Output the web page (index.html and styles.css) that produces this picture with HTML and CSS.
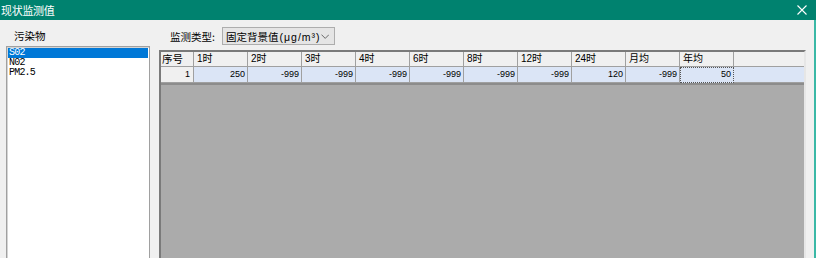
FILE: index.html
```html
<!DOCTYPE html>
<html lang="zh-CN">
<head>
<meta charset="utf-8">
<title>现状监测值</title>
<link rel="stylesheet" href="styles.css">
</head>
<body>
<div class="window">
  <div class="titlebar">
    <span class="title">现状监测值</span>
    <svg class="close" width="10" height="10" viewBox="0 0 10 10"><path d="M0.5 0.5L9.5 9.5M9.5 0.5L0.5 9.5" stroke="#fff" stroke-width="1.1" fill="none"/></svg>
  </div>
  <div class="content">
    <div class="left">
      <div class="label">污染物</div>
      <div class="listbox">
        <div class="item selected">S02</div>
        <div class="item">N02</div>
        <div class="item">PM2.5</div>
      </div>
    </div>
    <div class="right">
      <div class="toolbar">
        <span class="tlabel">监测类型:</span>
        <div class="combo">
          <span class="combo-text">固定背景值<span class="unit">(μg/m³)</span></span>
          <svg class="chev" width="9" height="5" viewBox="0 0 9 5"><path d="M0.5 0.5L4.5 4.5L8.5 0.5" stroke="#606060" stroke-width="1" fill="none"/></svg>
        </div>
      </div>
      <div class="grid">
        <div class="row head">
          <div class="cell rh">序号</div>
          <div class="cell">1时</div>
          <div class="cell">2时</div>
          <div class="cell">3时</div>
          <div class="cell">4时</div>
          <div class="cell">6时</div>
          <div class="cell">8时</div>
          <div class="cell">12时</div>
          <div class="cell">24时</div>
          <div class="cell">月均</div>
          <div class="cell">年均</div>
          <div class="cell last"></div>
        </div>
        <div class="row data">
          <div class="cell rh">1</div>
          <div class="cell">250</div>
          <div class="cell">-999</div>
          <div class="cell">-999</div>
          <div class="cell">-999</div>
          <div class="cell">-999</div>
          <div class="cell">-999</div>
          <div class="cell">-999</div>
          <div class="cell">120</div>
          <div class="cell">-999</div>
          <div class="cell focus">50</div>
          <div class="cell last"></div>
        </div>
      </div>
    </div>
  </div>
</div>
</body>
</html>
```

FILE: styles.css
```css
html, body {
  margin: 0;
  padding: 0;
}
body {
  width: 816px;
  height: 258px;
  overflow: hidden;
  background: #f0f0f0;
  font-family: "Liberation Sans", "Noto Sans CJK SC", sans-serif;
  color: #000;
}
.window {
  display: flex;
  flex-direction: column;
  height: 258px;
}
.titlebar {
  height: 20px;
  flex: none;
  background: #00826f;
  color: #fff;
  display: flex;
  align-items: center;
  justify-content: space-between;
  padding: 0 9px 0 1px;
  font-size: 11px;
}
.title {
  font-family: "Noto Sans CJK SC", sans-serif;
  line-height: 20px;
  letter-spacing: -0.3px;
}
.close {
  display: block;
  margin-top: -1px;
}
.content {
  flex: 1;
  display: flex;
  border-right: 2px solid #3ab8a6;
  min-height: 0;
}
.left {
  width: 150px;
  flex: none;
  padding: 7px 0 0 6px;
  box-sizing: border-box;
  display: flex;
  flex-direction: column;
}
.label {
  font-family: "Noto Sans CJK SC", sans-serif;
  font-size: 10.5px;
  line-height: 17px;
  height: 17px;
  padding-left: 8px;
}
.listbox {
  margin-top: 2px;
  width: 144px;
  flex: 1;
  box-sizing: border-box;
  background: #fff;
  border-left: 1px solid #a0a0a0;
  border-top: 1px solid #a0a0a0;
  border-right: 1px solid #a0a0a0;
  box-shadow: inset 1px 1px 0 #d4d4d4;
  padding: 1px 1px 0 1px;
}
.item {
  font-family: "Liberation Mono", monospace;
  font-size: 10px;
  line-height: 10px;
  height: 10px;
  padding-left: 1px;
  letter-spacing: -0.8px;
}
.item.selected {
  background: #0078d7;
  color: #fff;
}
.right {
  flex: 1;
  padding: 7px 8px 0 9px;
  display: flex;
  flex-direction: column;
  min-width: 0;
}
.toolbar {
  display: flex;
  align-items: center;
  height: 18px;
}
.tlabel {
  width: 52px;
  padding-left: 11px;
  font-family: "Noto Sans CJK SC", sans-serif;
  font-size: 10.5px;
  white-space: nowrap;
}
.combo {
  width: 113px;
  height: 18px;
  box-sizing: border-box;
  border: 1px solid #adadad;
  background: #e5e5e5;
  display: flex;
  align-items: center;
  justify-content: space-between;
  padding: 0 5px 0 3px;
}
.combo-text {
  font-family: "Noto Sans CJK SC", sans-serif;
  font-size: 10.5px;
  white-space: nowrap;
}
.unit {
  font-family: "Liberation Sans", "Noto Sans CJK SC", sans-serif;
  letter-spacing: 1px;
  padding-left: 1px;
}
.chev {
  display: block;
}
.grid {
  margin-top: 5px;
  flex: 1;
  background: #ababab;
  border-left: 2px solid #7a7a7a;
  border-top: 2px solid #7a7a7a;
  border-right: 2px solid #e6e6e6;
  box-sizing: border-box;
  width: 647px;
}
.row {
  display: grid;
  grid-template-columns: 33px repeat(10, 54px) 1fr;
  height: 15px;
}
.row.data {
  height: 16px;
  border-bottom: 2px solid #8c8c8c;
}
.cell {
  box-sizing: border-box;
  border-right: 1px solid #a0a0a0;
  border-bottom: 1px solid #a0a0a0;
  white-space: nowrap;
  overflow: hidden;
}
.head .cell {
  background: #f0f0f0;
  font-family: "Liberation Sans", "Noto Sans CJK SC", sans-serif;
  font-size: 10px;
  line-height: 14px;
  padding-left: 3px;
}
.head .cell.rh {
  padding-left: 1px;
  font-size: 10.5px;
}
.data .cell {
  background: #dbe5f6;
  font-size: 9px;
  line-height: 15px;
  text-align: right;
  padding-right: 2px;
}
.data .cell.rh {
  background: #f0f0f0;
  padding-right: 3px;
}
.cell.last {
  border-right: none;
}
.data .cell.focus {
  border: 1px dotted #555;
  line-height: 13px;
}
```
